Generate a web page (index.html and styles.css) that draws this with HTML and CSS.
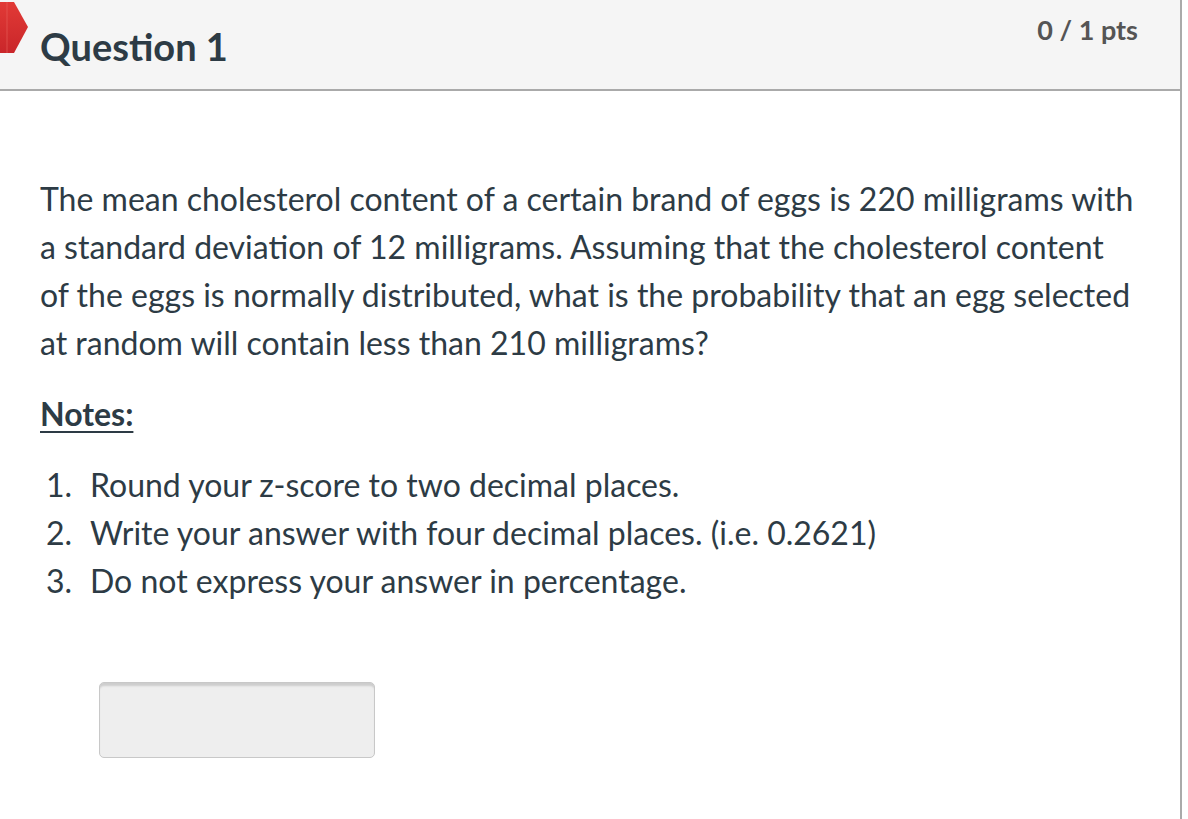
FILE: index.html
```html
<!DOCTYPE html>
<html>
<head>
<meta charset="utf-8">
<link rel="stylesheet" href="styles.css">
</head>
<body>
<div class="question">
  <div class="header">
    <svg class="flag" width="30" height="56" viewBox="0 0 30 56">
      <defs>
        <linearGradient id="fg" x1="0" y1="0" x2="0" y2="1">
          <stop offset="0" stop-color="#e23a36"/>
          <stop offset="1" stop-color="#c9262a"/>
        </linearGradient>
      </defs>
      <polygon points="0,2 14,2 28,27 14,53 0,53" fill="url(#fg)"/>
      <line x1="7" y1="2" x2="7" y2="53" stroke="#e8625c" stroke-width="1" opacity="0.6"/>
    </svg>
    <h2 class="title">Question 1</h2>
    <div class="pts">0 / 1 pts</div>
  </div>
  <div class="body">
    <p class="text">The mean cholesterol content of a certain brand of eggs is 220 milligrams with a standard deviation of 12 milligrams. Assuming that the cholesterol content of the eggs is normally distributed, what is the probability that an egg selected at random will contain less than 210 milligrams?</p>
    <p class="notes">Notes:</p>
    <ol class="list">
      <li>Round your z-score to two decimal places.</li>
      <li>Write your answer with four decimal places. (i.e. 0.2621)</li>
      <li>Do not express your answer in percentage.</li>
    </ol>
    <div class="answer"></div>
  </div>
</div>
</body>
</html>
```
FILE: styles.css
```css
html, body {
  margin: 0;
  padding: 0;
  background: #fff;
}
body {
  font-family: Lato, "Open Sans", sans-serif;
  color: #2d3b45;
}
.question {
  width: 1180px;
  height: 819px;
  border-right: 2px solid #aaa;
}
.header {
  position: relative;
  height: 89px;
  background: #f5f5f5;
  border-bottom: 2px solid #aaa;
  display: flex;
  justify-content: space-between;
  padding: 0 42px 0 40px;
}
.flag {
  position: absolute;
  left: 0;
  top: 0;
}
.title {
  margin: 0;
  padding-top: 23px;
  font-size: 38px;
  font-weight: 700;
  line-height: 46px;
  color: #2d3b45;
}
.pts {
  padding-top: 13px;
  font-size: 27px;
  font-weight: 700;
  line-height: 34px;
  color: #555;
}
.body {
  padding: 0 40px;
  font-size: 32px;
  line-height: 48px;
}
.text {
  margin: 84px 0 0 0;
}
.notes {
  margin: 23px 0 0 0;
  font-weight: 700;
  text-decoration: underline;
  text-decoration-thickness: 2px;
  text-underline-offset: 5px;
}
.list {
  margin: 23px 0 0 0;
  padding-left: 50px;
  list-style: none;
  counter-reset: item;
}
.list li {
  counter-increment: item;
}
.list li::before {
  content: counter(item) ".";
  display: inline-block;
  width: 44px;
  margin-left: -44px;
}
.answer {
  margin: 77px 0 0 59px;
  width: 276px;
  height: 76px;
  box-sizing: border-box;
  background: #eee;
  border: 1px solid #c8c8c8;
  border-radius: 5px;
  box-shadow: inset 0 4px 2px -1px #cdcdcd;
}
```
